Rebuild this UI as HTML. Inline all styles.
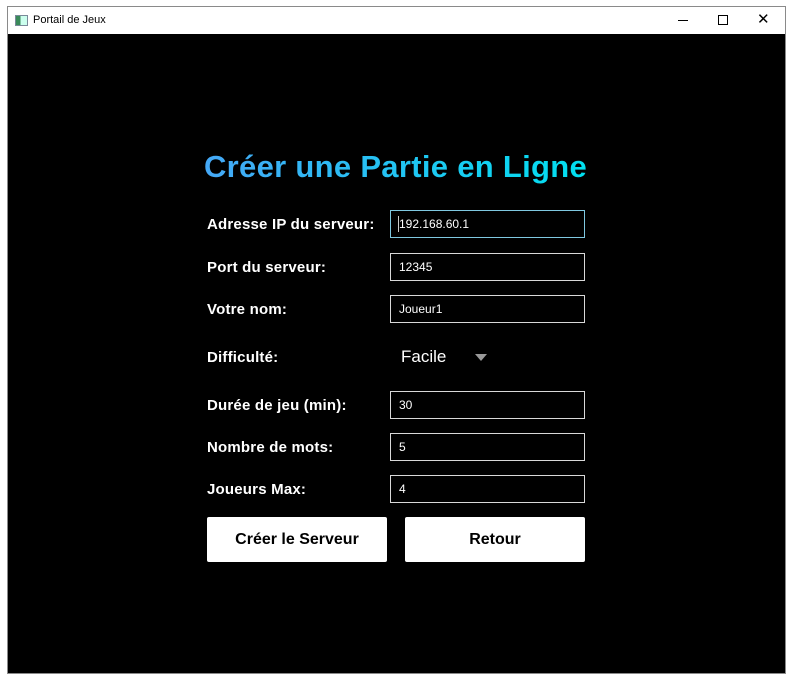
<!DOCTYPE html>
<html><head><style>
body{margin:0;width:790px;height:679px;background:#fff;position:relative;overflow:hidden;font-family:"Liberation Sans",sans-serif}
.win{position:absolute;left:7px;top:6px;width:777px;height:666px;border:1px solid #8a8a8a;background:#fff}
.tb{position:absolute;left:0;top:0;width:777px;height:27px;font-size:11px;color:#000}
.content{position:absolute;left:0;top:27px;width:777px;height:639px;background:#000}
.ttl{position:absolute;left:0;top:0;font-size:31px;letter-spacing:0.3px;font-weight:bold;background:linear-gradient(90deg,#45a8f6,#00e0f0);-webkit-background-clip:text;color:transparent;white-space:nowrap}
.lbl{position:absolute;left:207px;color:#fff;font-weight:bold;font-size:15px;letter-spacing:0.2px}
.box{position:absolute;left:390px;width:185px;height:26px;border:1px solid #d8d8d8;color:#fff;font-size:12px;line-height:26px;padding-left:8px;box-sizing:content-box}
.btn{position:absolute;top:517px;width:180px;height:45px;background:#fff;color:#000;font-weight:bold;font-size:16px;text-align:center;line-height:45px;border-radius:2px}
</style></head><body>
<div class="win">
<div class="tb">
<div style="position:absolute;left:7px;top:8px;width:11px;height:9px;border:1px solid #7a8a9a;background:linear-gradient(90deg,#3a8a5a 40%,#cfe 40%)"></div>
<div style="position:absolute;left:25px;top:7px">Portail de Jeux</div>
<div style="position:absolute;left:670px;top:13px;width:10px;height:1px;background:#000"></div>
<div style="position:absolute;left:710px;top:8px;width:8px;height:8px;border:1px solid #000"></div>
<div style="position:absolute;left:749px;top:3px;font-size:15px">✕</div>
</div>
<div class="content"></div>
</div>
<div class="ttl" style="left:204px;top:149px">Créer une Partie en Ligne</div>
<div class="lbl" style="top:216px">Adresse IP du serveur:</div>
<div class="box" style="top:210px;border-color:#7fc8e0">192.168.60.1</div>
<div style="position:absolute;left:398px;top:216px;width:1px;height:16px;background:#ccc"></div>
<div class="lbl" style="top:259px">Port du serveur:</div>
<div class="box" style="top:253px">12345</div>
<div class="lbl" style="top:301px">Votre nom:</div>
<div class="box" style="top:295px">Joueur1</div>
<div class="lbl" style="top:349px">Difficulté:</div>
<div style="position:absolute;left:401px;top:347px;color:#fff;font-size:17px">Facile</div>
<div style="position:absolute;left:475px;top:354px;width:0;height:0;border-left:6px solid transparent;border-right:6px solid transparent;border-top:7px solid #999"></div>
<div class="lbl" style="top:397px">Durée de jeu (min):</div>
<div class="box" style="top:391px">30</div>
<div class="lbl" style="top:439px">Nombre de mots:</div>
<div class="box" style="top:433px">5</div>
<div class="lbl" style="top:481px">Joueurs Max:</div>
<div class="box" style="top:475px">4</div>
<div class="btn" style="left:207px">Créer le Serveur</div>
<div class="btn" style="left:405px">Retour</div>
</body></html>
